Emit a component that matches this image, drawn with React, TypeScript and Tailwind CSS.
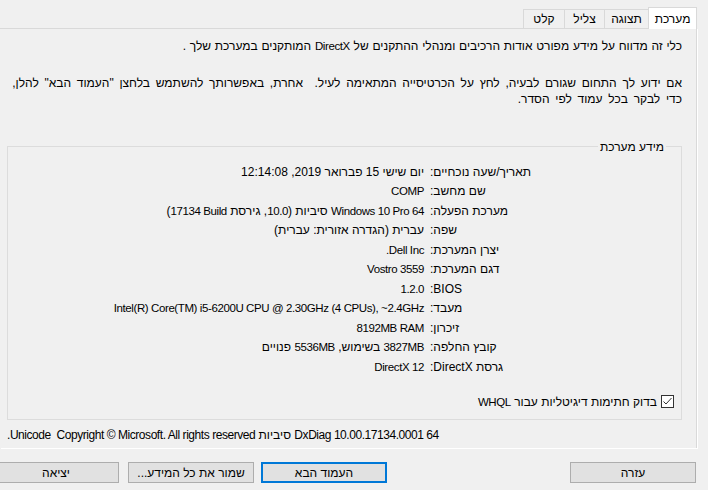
import React from 'react';

// Latin runs are set a little smaller and tighter: the reference font is narrower than Arial
const L = ({ children }: { children: React.ReactNode }) => (
  <span className="text-[11.5px] tracking-[-0.4px]">{children}</span>
);

const rows: [string, React.ReactNode][] = [
  ['תאריך/שעה נוכחיים:', 'יום שישי 15 פברואר 2019, 12:14:08'],
  ['שם מחשב:', <L>COMP</L>],
  [
    'מערכת הפעלה:',
    <>
      <L>Windows 10 Pro 64</L> סיביות (<L>10.0</L>, גירסת{' '}
      <span dir="ltr" className="text-[11.5px] tracking-[-0.4px]">
        17134 Build
      </span>
      )
    </>,
  ],
  ['שפה:', 'עברית (הגדרה אזורית: עברית)'],
  ['יצרן המערכת:', <L>Dell Inc.</L>],
  ['דגם המערכת:', <L>Vostro 3559</L>],
  ['BIOS:', <L>1.2.0</L>],
  ['מעבד:', <L>Intel(R) Core(TM) i5-6200U CPU @ 2.30GHz (4 CPUs), ~2.4GHz</L>],
  ['זיכרון:', <L>8192MB RAM</L>],
  [
    'קובץ החלפה:',
    <>
      <L>3827MB</L> בשימוש, <L>5536MB</L> פנויים
    </>,
  ],
  ['גרסת DirectX:', <L>DirectX 12</L>],
];

const Tab = ({ label, active, w }: { label: string; active?: boolean; w: string }) => (
  <div
    className={`${w} flex items-center justify-center border-[#d9d9d9] ${
      active
        ? 'relative z-10 -mb-px h-[22px] border border-b-0 bg-white'
        : 'h-[19px] border border-r-0 border-b-0 bg-[#f0f0f0]'
    }`}
  >
    {label}
  </div>
);

const Button = ({ label, primary, extra = '' }: { label: string; primary?: boolean; extra?: string }) => (
  <button
    className={`h-[21px] w-[126px] shrink-0 bg-[#e1e1e1] text-[12px] text-black ${
      primary ? 'border-2 border-[#0078d7]' : 'border border-[#adadad]'
    } ${extra}`}
  >
    {label}
  </button>
);

export default function App() {
  return (
    <div
      dir="rtl"
      className="h-[490px] w-[708px] overflow-hidden bg-[#f0f0f0] text-[12px] leading-[16px] text-black"
      style={{ fontFamily: '"Liberation Sans", Arial, sans-serif' }}
    >
      {/* tabs */}
      <div className="flex h-[28px] items-end pr-[11px]">
        <Tab label="מערכת" active w="w-[49px]" />
        <Tab label="תצוגה" w="w-[44px]" />
        <Tab label="צליל" w="w-[40px]" />
        <Tab label="קלט" w="w-[41px]" />
      </div>

      {/* page */}
      <div className="mr-[11px] h-[420px] border-t border-r border-[#d9d9d9] pl-[7px] pr-[14px] shadow-[1px_1px_0_#ffffff]">
        <p className="mt-[9px] [word-spacing:0.4px]">
          כלי זה מדווח על מידע מפורט אודות הרכיבים ומנהלי ההתקנים של <L>DirectX</L> המותקנים במערכת שלך .
        </p>
        <p className="mt-[21px] [word-spacing:2.4px]">
          אם ידוע לך התחום שגורם לבעיה, לחץ על הכרטיסייה המתאימה לעיל.&nbsp; אחרת, באפשרותך להשתמש בלחצן "העמוד הבא" להלן,
          <br />
          כדי לבקר בכל עמוד לפי הסדר.
        </p>

        <div className="relative mt-[39px] h-[274px] border border-[#dcdcdc]">
          <span className="absolute -top-[8px] right-[15px] bg-[#f0f0f0] px-[2px]">מידע מערכת</span>

          <div className="pt-[15px]">
            {rows.map(([label, value]) => (
              <div key={label} className="grid h-[19.5px] grid-cols-[251px_1fr] items-center gap-[6px]">
                <div className="text-left">{label}</div>
                <div className="whitespace-nowrap text-right">{value}</div>
              </div>
            ))}
          </div>

          <div className="mr-[7px] mt-[17px] flex items-center gap-[4px]">
            <span className="flex h-[13px] w-[13px] items-center justify-center border border-[#333333] bg-white">
              <svg width="11" height="11" viewBox="0 0 11 11">
                <polyline points="1.5,5.5 4,8 9.5,2" fill="none" stroke="#333333" strokeWidth="1" />
              </svg>
            </span>
            <span>
              בדוק חתימות דיגיטליות עבור <L>WHQL</L>
            </span>
          </div>
        </div>

        <p className="mt-[7px] text-left">
          <span className="tracking-[-0.45px]">DxDiag 10.00.17134.0001 64</span> סיביות{' '}
          <span className="tracking-[-0.45px]">Unicode&nbsp; Copyright © Microsoft. All rights reserved.</span>
        </p>
      </div>

      {/* buttons */}
      <div className="mt-[14px] flex pr-[12px]">
        <Button label="עזרה" />
        <div className="flex-1" />
        <Button label="העמוד הבא" primary />
        <Button label="שמור את כל המידע..." extra="mr-[7px]" />
        <Button label="יציאה" extra="mr-[9px] -ml-[7px]" />
      </div>
    </div>
  );
}
